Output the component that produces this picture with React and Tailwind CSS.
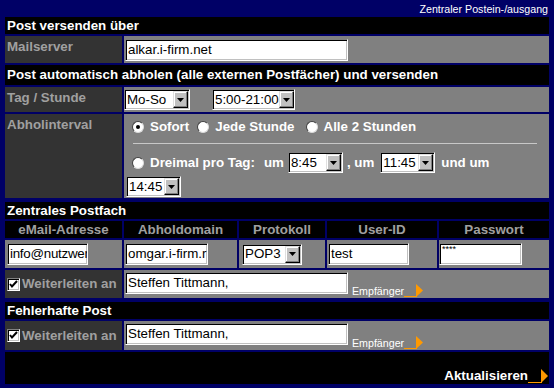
import React from 'react';

const inset =
  'border border-t-[#808080] border-l-[#808080] border-r-white border-b-white shadow-[inset_1px_1px_0_#000,inset_-1px_-1px_0_#c0c0c0]';

const TextInput = ({ value, className = '' }) => (
  <div
    className={`h-[22px] bg-white ${inset} flex items-center overflow-hidden whitespace-nowrap pl-[2px] text-[13.33px] text-black font-normal ${className}`}
  >
    {value}
  </div>
);

const Select = ({ value, className = '' }) => (
  <div
    className={`h-[21px] bg-white ${inset} flex items-center justify-between text-[13.33px] text-black font-normal shrink-0 ${className}`}
  >
    <span className="pl-[2px] whitespace-nowrap">{value}</span>
    <span className="w-[15px] h-[17px] mr-[1px] bg-[#c0c0c0] border border-t-[#dfdfdf] border-l-[#dfdfdf] border-r-black border-b-black shadow-[inset_-1px_-1px_0_#808080,inset_1px_1px_0_#fff] flex items-center justify-center shrink-0">
      <svg width="7" height="4" viewBox="0 0 7 4">
        <path d="M0 0h7L3.5 4z" fill="#000" />
      </svg>
    </span>
  </div>
);

const Radio = ({ on, className = '' }) => (
  <span
    className={`w-[12px] h-[12px] rounded-full bg-white border border-t-[#404040] border-l-[#404040] border-r-[#dcdcdc] border-b-[#dcdcdc] flex items-center justify-center shrink-0 ${className}`}
  >
    {on && <span className="w-[4px] h-[4px] rounded-full bg-black" />}
  </span>
);

const Checkbox = () => (
  <span className={`w-[13px] h-[13px] bg-white ${inset} flex items-center justify-center shrink-0`}>
    <svg width="9" height="9" viewBox="0 0 9 9">
      <path d="M1 4l2 2.5L8 1" stroke="#000" strokeWidth="2" fill="none" />
    </svg>
  </span>
);

const Arrow = ({ w = 19, h = 13 }) => (
  <svg width={w} height={h} viewBox={`0 0 ${w} ${h}`} className="shrink-0">
    <path d={`M0 ${h - 0.5}H${w - 6}`} stroke="#ff9900" strokeWidth="1" />
    <path d={`M${w - 7} 0L${w} ${h / 2}L${w - 7} ${h}Z`} fill="#ff9900" />
  </svg>
);

const Head = ({ children, className = '' }) => (
  <div className={`col-span-5 bg-black flex items-center pl-[2px] text-white font-bold text-[13.33px] whitespace-nowrap ${className}`}>
    {children}
  </div>
);

const Label = ({ children, className = '' }) => (
  <div className={`bg-[#333333] pt-[3px] pl-[2px] leading-[15px] text-[#a0a0a0] font-bold text-[13.33px] whitespace-nowrap ${className}`}>
    {children}
  </div>
);

const Forward = ({ h }) => (
  <>
    <div className={`${h} bg-[#333333] flex items-center pl-[2px] text-[#a0a0a0] font-bold text-[13.33px] whitespace-nowrap`}>
      <Checkbox />
      <span className="ml-[2px]">Weiterleiten an</span>
    </div>
    <div className={`${h} col-span-4 bg-[#808080] flex items-start pt-[2px] pl-[1px]`}>
      <TextInput value="Steffen Tittmann," className="w-[223px]" />
      <div className="self-end mb-[1px] ml-[4px] flex items-end">
        <span className="text-[10.67px] leading-[12px] text-white">Empfänger</span>
        <Arrow />
      </div>
    </div>
  </>
);

export default function App() {
  return (
    <div className="w-[554px] h-[388px] bg-[#000066] font-['Liberation_Sans',Arial,sans-serif] overflow-hidden">
      <div className="h-[17px] flex items-center justify-end pr-[6px] text-[10.67px] text-white">
        Zentraler Postein-/ausgang
      </div>

      <div className="grid grid-cols-[117px_113px_86px_110px_110px] gap-[2px] px-[5px]">
        {/* Post versenden */}
        <Head className="h-[17px]">Post versenden über</Head>
        <Label className="h-[27px]">Mailserver</Label>
        <div className="col-span-4 bg-[#808080] flex items-center pl-[1px]">
          <TextInput value="alkar.i-firm.net" className="w-[223px]" />
        </div>

        {/* Abholen */}
        <Head className="h-[20px]">Post automatisch abholen (alle externen Postfächer) und versenden</Head>
        <Label className="h-[25px]">Tag / Stunde</Label>
        <div className="col-span-4 bg-[#808080] flex items-center">
          <Select value="Mo-So" className="w-[66px]" />
          <Select value="5:00-21:00" className="w-[83px] ml-[22px]" />
        </div>

        <Label className="h-[84px]">Abholinterval</Label>
        <div className="col-span-4 bg-[#808080] pt-[5px] text-white font-bold text-[13.33px] whitespace-nowrap">
          <div className="h-[16px] flex items-center pl-[8px]">
            <Radio on />
            <span className="ml-[6px]">Sofort</span>
            <Radio className="ml-[8px]" />
            <span className="ml-[6px]">Jede Stunde</span>
            <Radio className="ml-[11px]" />
            <span className="ml-[6px]">Alle 2 Stunden</span>
          </div>
          <div className="mt-[8px] ml-[9px] mr-[12px] h-px bg-[#c8c8c8]" />
          <div className="mt-[8px] h-[21px] flex items-center pl-[8px]">
            <Radio />
            <span className="ml-[6px]">Dreimal pro Tag:</span>
            <span className="ml-[9px]">um</span>
            <Select value="8:45" className="w-[55px] ml-[4px]" />
            <span className="ml-[4px]">, um</span>
            <Select value="11:45" className="w-[55px] ml-[6px]" />
            <span className="ml-[6px]">und um</span>
          </div>
          <div className="mt-[3px] flex pl-[2px]">
            <Select value="14:45" className="w-[55px]" />
          </div>
        </div>

        {/* Zentrales Postfach */}
        <Head className="h-[17px] mt-[2px]">Zentrales Postfach</Head>
        {['eMail-Adresse', 'Abholdomain', 'Protokoll', 'User-ID', 'Passwort'].map((t) => (
          <div
            key={t}
            className="h-[17px] bg-black flex items-center justify-center text-[#a0a0a0] font-bold text-[13.33px] whitespace-nowrap"
          >
            {t}
          </div>
        ))}
        <div className="h-[28px] bg-[#808080] flex items-center pl-[2px]">
          <TextInput value="info@nutzwer" className="w-[81px] pl-[1px] tracking-[-0.25px]" />
        </div>
        <div className="bg-[#808080] flex items-center pl-[1px]">
          <TextInput value="omgar.i-firm.r" className="w-[83px]" />
        </div>
        <div className="bg-[#808080] flex items-center pl-[3px]">
          <Select value="POP3" className="w-[60px]" />
        </div>
        <div className="bg-[#808080] flex items-center pl-[1px]">
          <TextInput value="test" className="w-[81px]" />
        </div>
        <div className="bg-[#808080] flex items-center">
          <div className={`w-[83px] h-[22px] bg-white ${inset} pl-[2px] pt-[1px] text-[9px] leading-[9px] text-black`}>
            ****
          </div>
        </div>
        <Forward h="h-[28px]" />

        {/* Fehlerhafte Post */}
        <Head className="h-[17px] mt-[2px]">Fehlerhafte Post</Head>
        <Forward h="h-[29px]" />

        {/* Aktualisieren */}
        <div className="col-span-5 h-[32px] bg-black flex items-end justify-end pb-[1px] pr-[1px]">
          <span className="text-white font-bold text-[13.33px] leading-[15px]">Aktualisieren</span>
          <Arrow w={20} h={14} />
        </div>
      </div>
    </div>
  );
}
